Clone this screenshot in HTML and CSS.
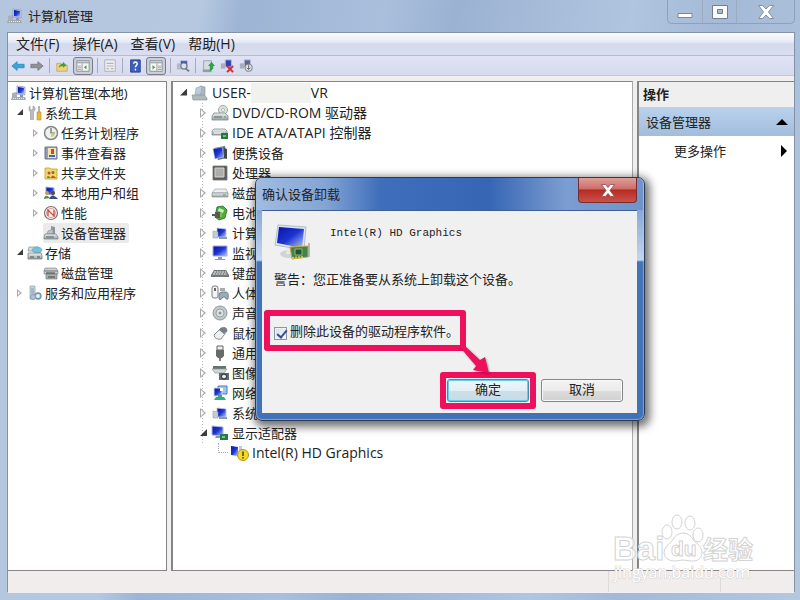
FILE: index.html
```html
<!DOCTYPE html>
<html lang="zh-CN">
<head>
<meta charset="utf-8">
<title>计算机管理</title>
<link rel="stylesheet" href="styles.css">
</head>
<body>
<svg class="sprite" aria-hidden="true">
  <defs>
    <linearGradient id="screen" x1="0" y1="0" x2="1" y2="1"><stop offset="0" stop-color="#0a12a8"/><stop offset=".5" stop-color="#1c35d0"/><stop offset="1" stop-color="#b8ccfa"/></linearGradient>
    <linearGradient id="metal" x1="0" y1="0" x2="0" y2="1"><stop offset="0" stop-color="#eef1f1"/><stop offset="1" stop-color="#9ba3a6"/></linearGradient>
  </defs>
  <symbol id="i-computer" viewBox="0 0 16 16"><path d="M1 8l5-1v6H1z" fill="#a8b0b8"/><path d="M6 1l8 1v8l-8-1z" fill="#c9d3ea" stroke="#8b96b5" stroke-width=".7"/><path d="M7 2l6 1v6L7 8z" fill="url(#screen)"/><path d="M9 10h3v2H9z" fill="#8b95a5"/><path d="M1 12h13l1 3H0z" fill="#a2a9b0"/><path d="M2 13.5h11" stroke="#eee" stroke-dasharray="1 1"/></symbol>
  <symbol id="i-tools" viewBox="0 0 16 16"><path d="M3 1v3l1.500 1L6 4V1l2 1.500V5L6.500 7v7.500h-3V7L2 5V2.500z" fill="#b9bec2" stroke="#8d9499" stroke-width=".6"/><path d="M11 1h2v6h-2z" fill="#aeb4b8"/><path d="M10 7h4v8h-4z" fill="#eab83d" stroke="#b98a25" stroke-width=".6"/></symbol>
  <symbol id="i-clock" viewBox="0 0 16 16"><circle cx="8" cy="8" r="6.500" fill="#eef1e8" stroke="#80868a" stroke-width="1.500"/><path d="M8 3v5h4" fill="none" stroke="#666c62" stroke-width="1.200"/><path d="M8 8l4 .5A4 4 0 0 1 8 12z" fill="#d9c981"/></symbol>
  <symbol id="i-event" viewBox="0 0 16 16"><path d="M2 2h12v12H2z" fill="#8fa2cf" stroke="#6d7690"/><path d="M5 3h8v10H5z" fill="#f7e3ad"/><path d="M8 4h3v5H8z" fill="#d8432f"/><path d="M6 10h6v2H6z" fill="#3f66b8"/><path d="M3 3v11" stroke="#777" stroke-dasharray="1 1"/></symbol>
  <symbol id="i-share" viewBox="0 0 16 16"><path d="M2 3h5l1 1h6v10H2z" fill="#f3d768" stroke="#c59d2e" stroke-width=".8"/><circle cx="6" cy="8" r="1.500" fill="#a85a32"/><path d="M4 13q0-4 4 0z" fill="#4a8d52"/><circle cx="10" cy="7.500" r="1.500" fill="#9c6133"/><path d="M8 13q1-5 5 0z" fill="#bf5135"/></symbol>
  <symbol id="i-users" viewBox="0 0 16 16"><path d="M3 2l8 1v7l-8-1z" fill="url(#screen)" stroke="#9aa7cc"/><circle cx="4" cy="8" r="2" fill="#c3a05c"/><path d="M1 14q1-6 6-1z" fill="#5c8a4d"/><circle cx="10" cy="8" r="2" fill="#5c4a3c"/><path d="M6 14q3-7 9 0z" fill="#3a4b8d"/></symbol>
  <symbol id="i-perf" viewBox="0 0 16 16"><circle cx="8" cy="8" r="6.500" fill="#fbf3f1" stroke="#777" stroke-width="1.200"/><circle cx="8" cy="8" r="4.500" fill="none" stroke="#d99"/><path d="M5 11V5l6 6V5" fill="none" stroke="#cf4840" stroke-width="1.300"/></symbol>
  <symbol id="i-devmgr" viewBox="0 0 16 16"><path d="M8 1l4 1v8H8z" fill="#8d969c"/><path d="M5 6l5-2v5H4z" fill="#bac4c9" stroke="#7e898e" stroke-width=".6"/><path d="M2 9h11l2 3v2H1v-2z" fill="url(#metal)" stroke="#747d82" stroke-width=".7"/><path d="M3 12h8" stroke="#55605e"/></symbol>
  <symbol id="i-storage" viewBox="0 0 16 16"><path d="M2 2h9l2 4H1z" fill="#d9dee1" stroke="#808a90" stroke-width=".7"/><ellipse cx="10" cy="5" rx="5" ry="3" fill="#6cc5dd" stroke="#7a9cab" stroke-width=".6"/><path d="M1 8h13l1 3v3H1z" fill="url(#metal)" stroke="#656f75" stroke-width=".7"/><path d="M3 12h4M10 12h3" stroke="#4a5357"/></symbol>
  <symbol id="i-disk" viewBox="0 0 16 16"><path d="M2 3h11l2 3H1zM1 6h14v3H1z" fill="#c8cdcf" stroke="#777e80" stroke-width=".6"/><path d="M3 9h11v5H3z" fill="#a8afaf" stroke="#686e6e" stroke-width=".6"/><path d="M3 8h9M5 12h7" stroke="#444" stroke-width="1.200"/></symbol>
  <symbol id="i-services" viewBox="0 0 16 16"><path d="M3 1h5v13H3z" fill="#c4d5e1" stroke="#8ba3b5" stroke-width=".7"/><path d="M4 4h3M4 6h3M4 8h3" stroke="#7791a5" stroke-width=".8"/><circle cx="11" cy="11" r="3" fill="#cbd9e5" stroke="#6f91ad" stroke-width="1.300"/><circle cx="6" cy="12" r="2.500" fill="#bbd" stroke="#83a2b8"/><circle cx="11" cy="11" r="1" fill="#fff"/></symbol>
  <symbol id="i-host" viewBox="0 0 18 16"><path d="M9 1l5 1v11l-5 1z" fill="#aeb7bc" stroke="#87929a" stroke-width=".6"/><path d="M5 3l6-2-1 8-6 1z" fill="#b9cbe0" stroke="#8fa1b2" stroke-width=".6"/><path d="M1 10h12l3 3v2H2z" fill="#b0b8bc" stroke="#858f94" stroke-width=".6"/></symbol>
  <symbol id="i-dvd" viewBox="0 0 18 16"><circle cx="12" cy="5" r="4.500" fill="#dce2dc" stroke="#8d9791" stroke-width=".8"/><circle cx="12" cy="5" r="1.500" fill="#fff" stroke="#909890" stroke-width=".6"/><path d="M3 8h11l3 3v4H1v-4z" fill="url(#metal)" stroke="#7f8886" stroke-width=".8"/><path d="M3 12h8" stroke="#5b6664"/><path d="M13 12h2" stroke="#48a04c"/></symbol>
  <symbol id="i-ide" viewBox="0 0 18 16"><path d="M3 4h11l2 2v4H1V6z" fill="url(#metal)" stroke="#858d8a" stroke-width=".8"/><path d="M3 8h8" stroke="#fff"/><path d="M10 8h7v6h-7z" fill="#237a3f"/><path d="M12 10h3v2h-3z" fill="#79bd6d"/></symbol>
  <symbol id="i-portable" viewBox="0 0 18 16"><path d="M3 3l11-2 2 12-9 2z" fill="#6a7079"/><path d="M2 4l9-2 2 10-9 2z" fill="url(#screen)" stroke="#c0cae5" stroke-width=".5"/><path d="M13 3l3 1v10l-3-1z" fill="#42474d"/></symbol>
  <symbol id="i-cpu" viewBox="0 0 18 16"><path d="M2 1h14v14H2z" fill="#5a5a58" stroke="#777" stroke-width=".8"/><path d="M4 3h9v9H4z" fill="#adadab" stroke="#d5d5d5"/></symbol>
  <symbol id="i-drive" viewBox="0 0 18 16"><path d="M4 4h11l2 4H1z" fill="#edf0f0" stroke="#9ba3a3" stroke-width=".7"/><path d="M1 8h16v4H1z" fill="url(#metal)" stroke="#848c8c" stroke-width=".7"/><path d="M12 10h3" stroke="#47b14b"/></symbol>
  <symbol id="i-battery" viewBox="0 0 18 16"><path d="M6 2l6-1 4 4-2 8-6 2-4-3z" fill="#4caf3d" stroke="#246b27" stroke-width=".8"/><path d="M8 3l5 2-1 3-5-2z" fill="#c9efb4"/><path d="M1 9h3V7h5v6H4v-2H1z" fill="#555e55"/><path d="M9 9h2M9 11h2" stroke="#d8c33c"/></symbol>
  <symbol id="i-pcs" viewBox="0 0 18 16"><path d="M6 3l9 1v8H6z" fill="url(#screen)" stroke="#b8c4dd" stroke-width=".8"/><path d="M2 6l5 1v6H2z" fill="#c5ccd7" stroke="#929dac" stroke-width=".6"/><path d="M8 13h8" stroke="#8c9aaf" stroke-width="2"/></symbol>
  <symbol id="i-monitor" viewBox="0 0 18 16"><path d="M2 1h14v10H2z" fill="url(#screen)" stroke="#a3add2"/><path d="M7 12h4v2h3v1H4v-1h3z" fill="#9098b5"/></symbol>
  <symbol id="i-keyboard" viewBox="0 0 18 16"><path d="M3 5h12l3 5v2H0v-2z" fill="#74797b"/><path d="M3 7h12M2 9h14" stroke="#f4f4f4" stroke-dasharray="2 .7"/></symbol>
  <symbol id="i-hid" viewBox="0 0 18 16"><rect x="1" y="1" width="6" height="12" rx="2" fill="#f3f4f5" stroke="#777e84"/><path d="M3 3h2v3H3z" fill="#666"/><path d="M8 10q0-3 3-3h4q3 0 2 7-2 1-3-2h-2q-2 4-4 2z" fill="#98acb9" stroke="#71848f"/><path d="M9 3h5v3H9z" fill="#aaa"/></symbol>
  <symbol id="i-sound" viewBox="0 0 18 16"><circle cx="9" cy="8" r="7" fill="#c3c9cb" stroke="#929a9d"/><circle cx="9" cy="8" r="4" fill="#dfe4e7" stroke="#9aa2a5"/><circle cx="9" cy="8" r="1.500" fill="#8d9699"/></symbol>
  <symbol id="i-mouse" viewBox="0 0 18 16"><path d="M3 10l7-7q6-2 6 3l-6 8q-6 1-7-4z" fill="#eef0f0" stroke="#898e90"/><path d="M10 3q6-2 6 3l-3 3-5-4z" fill="#787e83"/></symbol>
  <symbol id="i-usb" viewBox="0 0 18 16"><path d="M6 1h6v4H6z" fill="#eee" stroke="#666"/><path d="M5 5h8v6l-2 2H7l-2-2z" fill="#686b6c"/><path d="M9 13v3" stroke="#555" stroke-width="1.500"/></symbol>
  <symbol id="i-imaging" viewBox="0 0 18 16"><path d="M2 1h13v3H2z" fill="#66736f"/><path d="M1 4h15l-3 4H4z" fill="#cfd8d8" stroke="#8b9593" stroke-width=".7"/><path d="M8 8h10v7H8z" fill="#5a6b71"/><circle cx="13" cy="11.500" r="2.500" fill="#dceaf1" stroke="#222"/></symbol>
  <symbol id="i-network" viewBox="0 0 18 16"><path d="M7 1h9v8H7z" fill="#9fc6ec" stroke="#4979bd"/><path d="M3 3h8v8H3z" fill="url(#screen)" stroke="#cad8ee"/><path d="M9 3h3v3H9z" fill="#fff"/><path d="M3 15l2-3h2v-2h4v2h2l2 3z" fill="#35ad78"/></symbol>
  <symbol id="i-display" viewBox="0 0 18 16"><path d="M1 1l11 1v9L1 10z" fill="url(#screen)" stroke="#acb7dc"/><path d="M5 11h4v2H4z" fill="#8b93a8"/><path d="M9 9h8v6H9z" fill="#267b4c"/><path d="M11 11h3v2h-3z" fill="#8bb98b"/></symbol>
  <symbol id="i-warn" viewBox="0 0 18 16"><path d="M0 1l7 1v9l-7-1z" fill="url(#screen)"/><path d="M8 1h3v8H8z" fill="#c0cade"/><circle cx="12" cy="10" r="5.500" fill="#f3da27" stroke="#b8921c"/><path d="M12 6.500v4.500M12 12v1.500" stroke="#4b410d" stroke-width="1.500"/></symbol>
</svg>

<main class="window">
  <header class="titlebar">
    <svg class="icon"><use href="#i-computer"/></svg>
    <h1>计算机管理</h1>
    <div class="caption">
      <button type="button" aria-label="最小化"><svg width="18" height="14" viewBox="0 0 18 14"><path d="M2 8.500h14v4H2z" fill="#fff" stroke="#7c8796"/></svg></button>
      <button type="button" aria-label="最大化"><svg width="18" height="14" viewBox="0 0 18 14"><path d="M1.500.5h15v13h-15zM6.500 4.500h5v4h-5z" fill="#f8fafc" fill-rule="evenodd" stroke="#737f8d"/></svg></button>
      <button type="button" class="wide" aria-label="关闭"><svg width="18" height="14" viewBox="0 0 18 14"><path d="M1.500.5h4L9 4 12.500.5h4L11.500 7l5 6.500h-4L9 10l-3.500 3.500h-4l5-6.500z" fill="#fff" stroke="#8791a0"/></svg></button>
    </div>
  </header>

  <div class="client">
    <nav class="menubar">
      <button type="button">文件(F)</button><button type="button">操作(A)</button><button type="button">查看(V)</button><button type="button">帮助(H)</button>
    </nav>
    <div class="toolbar">
      <button type="button" aria-label="后退"><svg viewBox="0 0 16 16"><path d="M1 8l6-5v3h8v4H7v3z" fill="#36a6dc" stroke="#2580b6" stroke-width=".8"/></svg></button>
      <button type="button" aria-label="前进"><svg viewBox="0 0 16 16"><path d="M15 8L9 3v3H1v4h8v3z" fill="#929295" stroke="#707074" stroke-width=".8"/></svg></button>
      <i class="sep"></i>
      <button type="button" aria-label="向上"><svg viewBox="0 0 16 16"><path d="M2 5h5l1 2h6v7H2z" fill="#ecd27a" stroke="#b99a47" stroke-width=".7"/><path d="M4 10q1-4 5-5V3l4 4-4 3V8Q6 8 4 10z" fill="#39a145"/></svg></button>
      <button type="button" class="pressed" aria-label="显示控制台树"><svg viewBox="0 0 16 16"><path d="M1 2h14v12H1z" fill="#f6f6f2" stroke="#858990"/><path d="M1 4h14" stroke="#a6abb5" stroke-width="2"/><path d="M7 5v9M2 8h4M2 10h4M2 12h4" stroke="#999"/><path d="M12 7v5l-3-2.500z" fill="#3fa344"/></svg></button>
      <i class="sep"></i>
      <button type="button" aria-label="属性"><svg viewBox="0 0 16 16"><path d="M2 1h12v13H2z" fill="#eeeeef" stroke="#aaabb5"/><path d="M4 5h8M4 8h8M4 11h3M9 11h3" stroke="#b3b4bc" stroke-width="1.200"/></svg></button>
      <i class="sep"></i>
      <button type="button" aria-label="帮助"><svg viewBox="0 0 16 16"><path d="M3 1h11v14H3z" fill="#3c60bc" stroke="#263f87"/><path d="M6.500 5.500q0-2 2-2t2 2q0 1-1 2t-1 2M8.500 11v2" fill="none" stroke="#fff" stroke-width="1.600"/></svg></button>
      <button type="button" class="pressed" aria-label="显示操作窗格"><svg viewBox="0 0 16 16"><path d="M1 2h14v12H1z" fill="#f6f6f2" stroke="#858990"/><path d="M1 4h14" stroke="#a6abb5" stroke-width="2"/><path d="M9 5v9M10 8h4M10 10h4M10 12h4" stroke="#999"/><path d="M4 7v5l3-2.500z" fill="#3fa344"/></svg></button>
      <i class="sep"></i>
      <button type="button" aria-label="扫描硬件改动"><svg viewBox="0 0 16 16"><path d="M5 2h8v8H5z" fill="#3546a0" stroke="#bdc5df"/><path d="M1 5h5v7H1z" fill="#b5bac4"/><circle cx="9" cy="8" r="3.500" fill="#d5e2ef" stroke="#767c90" stroke-width="1.300"/><path d="M11 11l4 3" stroke="#777" stroke-width="2"/></svg></button>
      <i class="sep"></i>
      <button type="button" aria-label="更新驱动程序"><svg viewBox="0 0 16 16"><path d="M3 2h9v11H3z" fill="#d6dce1" stroke="#969fa9"/><path d="M2 12h10v3H2z" fill="#969da4"/><path d="M10 14V8H8l4-5 4 5h-2v3z" fill="#2ba447"/></svg></button>
      <button type="button" aria-label="卸载"><svg viewBox="0 0 16 16"><path d="M6 1h7v8H6z" fill="#3040b0" stroke="#b3bfdf"/><path d="M1 5h5v6H1z" fill="#a8afbb"/><path d="M8 8l7 7M15 8l-7 7" stroke="#d02d35" stroke-width="2.200"/></svg></button>
      <button type="button" aria-label="禁用"><svg viewBox="0 0 16 16"><path d="M6 1h7v8H6z" fill="#5b6496" stroke="#b8bdcb"/><path d="M1 5h5v6H1z" fill="#a8afbb"/><circle cx="11" cy="10" r="4" fill="#e5e5e6" stroke="#8b8c91" stroke-width="1.300"/><path d="M11 7v5M9 10l2 2 2-2" fill="none" stroke="#555"/></svg></button>
    </div>

    <div class="panes">
      <section class="pane console">
        <ul class="tree">
          <li><div class="row"><svg class="icon"><use href="#i-computer"/></svg>计算机管理(本地)</div>
            <ul>
              <li><div class="row"><i class="arrow open"></i><svg class="icon"><use href="#i-tools"/></svg>系统工具</div>
                <ul>
                  <li><div class="row"><i class="arrow"></i><svg class="icon"><use href="#i-clock"/></svg>任务计划程序</div></li>
                  <li><div class="row"><i class="arrow"></i><svg class="icon"><use href="#i-event"/></svg>事件查看器</div></li>
                  <li><div class="row"><i class="arrow"></i><svg class="icon"><use href="#i-share"/></svg>共享文件夹</div></li>
                  <li><div class="row"><i class="arrow"></i><svg class="icon"><use href="#i-users"/></svg>本地用户和组</div></li>
                  <li><div class="row"><i class="arrow"></i><svg class="icon"><use href="#i-perf"/></svg>性能</div></li>
                  <li><div class="row"><i class="arrow none"></i><span class="selected"><svg class="icon"><use href="#i-devmgr"/></svg>设备管理器</span></div></li>
                </ul>
              </li>
              <li><div class="row"><i class="arrow open"></i><svg class="icon"><use href="#i-storage"/></svg>存储</div>
                <ul>
                  <li><div class="row"><i class="arrow none"></i><svg class="icon"><use href="#i-disk"/></svg>磁盘管理</div></li>
                </ul>
              </li>
              <li><div class="row"><i class="arrow"></i><svg class="icon"><use href="#i-services"/></svg>服务和应用程序</div></li>
            </ul>
          </li>
        </ul>
      </section>

      <section class="pane devices">
        <ul class="tree">
          <li><div class="row latin"><i class="arrow open"></i><svg class="icon"><use href="#i-host"/></svg><span class="host">USER-<i class="redacted"></i>VR</span></div>
            <ul class="lined">
              <li><div class="row latin"><i class="arrow"></i><svg class="icon"><use href="#i-dvd"/></svg>DVD/CD-ROM 驱动器</div></li>
              <li><div class="row latin"><i class="arrow"></i><svg class="icon"><use href="#i-ide"/></svg>IDE ATA/ATAPI 控制器</div></li>
              <li><div class="row"><i class="arrow"></i><svg class="icon"><use href="#i-portable"/></svg>便携设备</div></li>
              <li><div class="row"><i class="arrow"></i><svg class="icon"><use href="#i-cpu"/></svg>处理器</div></li>
              <li><div class="row"><i class="arrow"></i><svg class="icon"><use href="#i-drive"/></svg>磁盘</div></li>
              <li><div class="row"><i class="arrow"></i><svg class="icon"><use href="#i-battery"/></svg>电池</div></li>
              <li><div class="row"><i class="arrow"></i><svg class="icon"><use href="#i-pcs"/></svg>计算</div></li>
              <li><div class="row"><i class="arrow"></i><svg class="icon"><use href="#i-monitor"/></svg>监视</div></li>
              <li><div class="row"><i class="arrow"></i><svg class="icon"><use href="#i-keyboard"/></svg>键盘</div></li>
              <li><div class="row"><i class="arrow"></i><svg class="icon"><use href="#i-hid"/></svg>人体</div></li>
              <li><div class="row"><i class="arrow"></i><svg class="icon"><use href="#i-sound"/></svg>声音</div></li>
              <li><div class="row"><i class="arrow"></i><svg class="icon"><use href="#i-mouse"/></svg>鼠标</div></li>
              <li><div class="row"><i class="arrow"></i><svg class="icon"><use href="#i-usb"/></svg>通用</div></li>
              <li><div class="row"><i class="arrow"></i><svg class="icon"><use href="#i-imaging"/></svg>图像</div></li>
              <li><div class="row"><i class="arrow"></i><svg class="icon"><use href="#i-network"/></svg>网络</div></li>
              <li><div class="row"><i class="arrow"></i><svg class="icon"><use href="#i-pcs"/></svg>系统</div></li>
              <li class="last"><div class="row"><i class="arrow open"></i><svg class="icon"><use href="#i-display"/></svg>显示适配器</div>
                <ul>
                  <li><div class="row latin"><i class="arrow branch"></i><svg class="icon"><use href="#i-warn"/></svg>Intel(R) HD Graphics</div></li>
                </ul>
              </li>
            </ul>
          </li>
        </ul>
      </section>

      <aside class="pane actions">
        <h2>操作</h2>
        <button type="button" class="group">设备管理器<svg width="12" height="6" viewBox="0 0 12 6"><path d="M0 6l6-6 6 6z"/></svg></button>
        <button type="button" class="more">更多操作<svg width="6" height="12" viewBox="0 0 6 12"><path d="M0 0l6 6-6 6z"/></svg></button>
      </aside>
    </div>
    <footer class="status"><span></span><span></span><span></span></footer>
  </div>
</main>

<section class="dialog" role="dialog" aria-labelledby="dlg-title">
  <header>
    <h2 id="dlg-title">确认设备卸载</h2>
    <button type="button" class="close" aria-label="关闭"><svg width="14" height="13" viewBox="0 0 14 13"><path d="M.5.5h4L7 3.500 9.500.5h4L9 6.500l4.500 6h-4L7 9.500l-2.500 3h-4l4.500-6z" fill="#fff" stroke="#8e4a4a" stroke-width=".8"/></svg></button>
  </header>
  <div class="content">
    <div class="device">
      <svg width="38" height="38" viewBox="0 0 38 38"><ellipse cx="15" cy="31" rx="9" ry="4" fill="#cfd4d8"/><path d="M13 25h6l1 6h-8z" fill="#e6e9ec"/><path d="M4 2l28 2-2 23L1 22z" fill="#dce3ec" stroke="#b4bfca"/><path d="M5 4l25 2-2 19L3 20z" fill="url(#screen)"/><path d="M16 24l18-1v11l-16 2z" fill="#42834b" stroke="#caa93f"/><path d="M21 26h7v6h-7z" fill="#255138" stroke="#8ebc72"/><path d="M18 35l12-1" stroke="#e3be49" stroke-width="2" stroke-dasharray="2 1"/><path d="M35 20v14" stroke="#9ea5a5" stroke-width="1.500"/></svg>
      <span>Intel(R) HD Graphics</span>
    </div>
    <p>警告：您正准备要从系统上卸载这个设备。</p>
    <label class="check"><input type="checkbox" checked>删除此设备的驱动程序软件。</label>
    <div class="buttons"><button type="button" class="default">确定</button><button type="button">取消</button></div>
  </div>
  <i class="mark mark-check"></i>
  <i class="mark mark-ok"></i>
  <svg class="pointer" width="32" height="30" viewBox="0 0 32 30"><path d="M0 0h6l15 14 5-3 4 16-16-3 3-4z" fill="#ee0f5d"/></svg>
</section>

<svg class="watermark" width="150" height="74" viewBox="0 0 150 74" aria-hidden="true">
  <g fill="#fff" fill-opacity=".8" stroke="#d3d3d3" stroke-width="1">
    <text class="wm-brand" x="3" y="50">Bai</text>
    <ellipse cx="57" cy="22" rx="5" ry="7"/><ellipse cx="67" cy="12" rx="5" ry="7"/><ellipse cx="80" cy="13" rx="5" ry="7"/><ellipse cx="88" cy="25" rx="5" ry="7"/>
    <path d="M73 23q7 0 11 8 9 6 8 13-2 8-11 7-8-2-16 0-10 0-11-8 0-6 8-12 4-8 11-8z"/>
    <text class="wm-du" x="61" y="46">du</text>
    <text class="wm-cn" x="93" y="49">经验</text>
  </g>
  <text class="wm-url" x="4" y="68">jingyan.baidu.com</text>
</svg>
</body>
</html>
```
FILE: styles.css
```css
* { box-sizing: border-box; }

body {
  margin: 0;
  font: 13px/20px "Open Sans", "Noto Sans CJK SC", sans-serif;
  color: #222;
}

button {
  margin: 0;
  padding: 0;
  border: 0;
  background: none;
  color: inherit;
  font: inherit;
}

h1, h2, p, ul { margin: 0; padding: 0; }
h1, h2 { font-size: 13px; font-weight: 400; }
ul { list-style: none; }
i { font-style: normal; }
svg { display: block; flex: none; }

.sprite { position: absolute; width: 0; height: 0; }

.window {
  display: flex;
  flex-direction: column;
  min-height: 100vh;
  padding: 0 5px 7px 7px;
  background: linear-gradient(100deg, #b4c6dd 0, #b5c8e0 200px, #9db4d4 240px, #a9bfdc 380px, #9bb2d2 450px, #b0c5df 70%, #a3b9d6 80%, #b4c8de 100%);
}

.titlebar { display: flex; align-items: center; gap: 5px; height: 32px; }
.titlebar .icon { width: 16px; height: 16px; }
.titlebar h1 { flex: 1; }

.caption {
  display: flex;
  align-self: flex-start;
  height: 24px;
  border: 1px solid #8fa0b8;
  border-top: 0;
  border-radius: 0 0 5px 5px;
}
.caption button { display: flex; align-items: center; justify-content: center; width: 34px; }
.caption button + button { border-left: 1px solid #9cacbf; }
.caption .wide { width: 58px; }

.client {
  display: flex;
  flex: 1;
  flex-direction: column;
  border: 1px solid #8392a8;
  border-bottom-color: #eef0f4;
  background: #f0eeee;
}

.menubar {
  display: flex;
  gap: 13px;
  height: 23px;
  padding: 0 8px;
  border-bottom: 1px solid #b7bdce;
  background: linear-gradient(#fbfcfe, #e6eaf6 40%, #d4daed 50%, #d9def0);
  font-size: 14px;
}

.toolbar {
  display: flex;
  align-items: center;
  gap: 3px;
  height: 20px;
  padding: 0 2px;
  border-bottom: 1px solid #c4c9d6;
  background: linear-gradient(#dfe3f4, #d6daee);
}
.toolbar button { display: flex; align-items: center; justify-content: center; width: 16px; height: 18px; }
.toolbar svg { width: 14px; height: 14px; }
.toolbar .pressed { width: 20px; border: 1px solid #777d8b; border-radius: 3px; background: #c9cedb; }
.sep { width: 1px; height: 15px; margin: 0 1px; background: #a5abba; }

.panes {
  display: grid;
  flex: 1;
  grid-template-columns: 159px minmax(0, 1fr) 157px;
  gap: 4px;
  padding-top: 5px;
}
.pane { border: 1px solid #858585; border-width: 1px 1px 1px 2px; background: #fff; }
.console { border-left-width: 0; padding-left: 3px; }
.devices { padding-left: 5px; border-right-color: #aaa; }
.actions { border-right: 0; }

.tree { white-space: nowrap; }
.row { display: flex; align-items: center; gap: 2px; height: 20px; }
.latin { font-size: 14px; }
.tree > li > .row { height: 21px; }
.icon { width: 16px; height: 16px; }
.console .tree > li > ul { padding-left: 4px; }
.console .tree ul ul { padding-left: 16px; }
.devices .row { gap: 3px; }
.devices .icon { width: 18px; }
.devices .tree ul { padding-left: 20px; }

.lined { background: repeating-linear-gradient(#bbb 0 1px, transparent 1px 3px) 24px 0 / 1px 340px no-repeat; }

.arrow { position: relative; flex: none; width: 10px; height: 10px; }
.arrow::before { content: ""; display: block; width: 6px; height: 10px; margin-left: 2px; background: #aaa; clip-path: polygon(0 0, 100% 50%, 0 100%); }
.arrow::after { content: ""; position: absolute; inset: 2px auto auto 3px; width: 3px; height: 6px; background: #fff; clip-path: polygon(0 0, 100% 50%, 0 100%); }
.arrow.open::before { width: 7px; height: 7px; margin-top: 1px; background: #3c3c3c; clip-path: polygon(100% 0, 100% 100%, 0 100%); }
.arrow.open::after, .arrow.none::before, .arrow.none::after, .arrow.branch::before, .arrow.branch::after { display: none; }
.arrow.branch { align-self: flex-start; border: dotted #aaa; border-width: 0 0 1px 1px; }
.console .arrow::before { width: 5px; height: 8px; margin-top: 1px; }
.console .arrow::after { height: 4px; width: 2px; top: 3px; }
.console .arrow.open::before { width: 6px; height: 6px; }

.selected { display: flex; align-items: center; gap: 2px; padding-right: 3px; border-radius: 2px; background: #ebebeb; }
.host { display: flex; }
.redacted { width: 60px; height: 20px; background: #f1f2ee; }

.actions h2 { height: 25px; padding: 2px 4px; background: #f0efef; font-weight: 700; }
.actions button { display: flex; align-items: center; justify-content: space-between; width: 100%; height: 29px; padding: 0 6px 0 7px; }
.actions .group { background: linear-gradient(#b9d2ec, #a2bddd); }
.actions .more { padding: 0 7px 0 35px; }

.status { display: flex; height: 21px; background: #f0edec; }
.status span + span { width: 112px; border-left: 1px solid #dddada; }
.status span:first-child { flex: 1; }
.status span:last-child { width: 74px; }

.dialog {
  position: absolute;
  top: 177px;
  left: 255px;
  width: 390px;
  padding: 0 7px 7px 6px;
  border: 1px solid #273a57;
  border-radius: 7px;
  background: linear-gradient(#86a8d7 32px, #c3d6ee 82px, #4474b8 84px, #4172b7);
  box-shadow: 2px 3px 9px 3px rgba(0,0,0,.55), inset 0 0 1px 1px rgba(190,215,245,.5);
}
.dialog header {
  display: flex;
  align-items: center;
  justify-content: space-between;
  height: 32px;
  margin: 0 -6px;
  padding: 0 6px;
  border-radius: 6px 6px 0 0;
  background: linear-gradient(90deg, #a0bce2, #83a4d5 18%, #3f6fbb 32%, #3665b4 60%, #7b9dd1 80%, #7094c9);
}
.close { display: flex; align-items: center; justify-content: center; align-self: flex-start; width: 59px; height: 25px; border: 1px solid #712f35; border-top: 0; border-radius: 0 0 4px 4px; background: linear-gradient(#dea09b, #cf6d66 45%, #b62b24 50%, #cc5146); }

.content { padding: 12px 14px 11px 12px; border: 1px solid #3d5f91; border-width: 1px 0 0; background: #f0f0f0; font-family: "Liberation Mono", "Noto Sans CJK SC", monospace; }
.device { display: flex; gap: 18px; height: 38px; font-size: 11px; }
.content p { margin-top: 10px; }
.check { display: flex; align-items: center; gap: 3px; margin-top: 32px; }
.check input {
  appearance: none;
  width: 13px;
  height: 13px;
  margin: 0;
  border: 1px solid #8796ad;
  background: linear-gradient(135deg, #d2dbe9, #fff);
  box-shadow: inset 0 0 0 1px #eef2f8;
}
.check input::before { content: ""; display: block; width: 4px; height: 8px; margin-left: 4px; border: solid #35508c; border-width: 0 2px 2px 0; transform: rotate(40deg); }
.buttons { display: flex; justify-content: flex-end; gap: 12px; margin-top: 36px; }
.buttons button { width: 82px; height: 23px; border: 1px solid #858585; border-radius: 3px; background: linear-gradient(#f3f3f3, #ebebeb 50%, #dcdcdc 51%, #d1d1d1); box-shadow: inset 0 0 0 1px #fafafa; }
.buttons .default { border-color: #3c8fb8; background: linear-gradient(#eef6fa, #e2f0f6 50%, #cddfe8 51%, #c5dce8); box-shadow: inset 0 0 0 1px #68cdea; }

.mark { position: absolute; border: 6px solid #ee0f5d; border-radius: 3px; }
.mark-check { top: 132px; left: 8px; width: 202px; height: 41px; }
.mark-ok { top: 194px; left: 184px; width: 96px; height: 37px; }
.pointer { position: absolute; top: 168px; left: 203px; filter: drop-shadow(1px 1px 1px rgba(0,0,0,.35)); }

.watermark { position: absolute; right: 40px; bottom: 16px; overflow: visible; pointer-events: none; }
.wm-brand { font: 700 33px "Liberation Sans", sans-serif; }
.wm-du { font: 700 21px "Liberation Sans", sans-serif; }
.wm-cn { font: 700 25px "Noto Sans CJK SC", sans-serif; }
.wm-url { font: 16px "Open Sans", sans-serif; fill: #fff; stroke: #d3d3d3; stroke-width: 1px; paint-order: stroke; }
```
